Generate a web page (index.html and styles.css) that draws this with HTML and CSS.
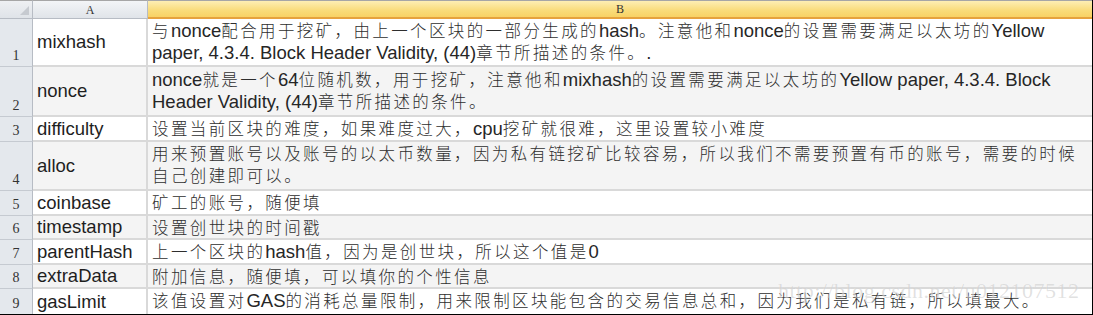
FILE: index.html
```html
<!DOCTYPE html>
<html lang="zh">
<head>
<meta charset="utf-8">
<title>genesis</title>
<link rel="stylesheet" href="styles.css">
</head>
<body>
<div class="sheet">
  <div class="row head">
    <div class="num corner"><span class="tri"></span></div>
    <div class="a colhead">A</div>
    <div class="b colhead sel">B</div>
  </div>
  <div class="row h48">
    <div class="num">1</div>
    <div class="a">mixhash</div>
    <div class="b">与<span class="en">nonce</span>配合用于挖矿，由上一个区块的一部分生成的<span class="en">hash</span>。注意他和<span class="en">nonce</span>的设置需要满足以太坊的<span class="en">Yellow</span><br><span class="en">paper, 4.3.4. Block Header Validity, (44)</span>章节所描述的条件。<span class="en">.</span></div>
  </div>
  <div class="row h50 alt">
    <div class="num">2</div>
    <div class="a">nonce</div>
    <div class="b"><span class="en">nonce</span>就是一个<span class="en">64</span>位随机数，用于挖矿，注意他和<span class="en">mixhash</span>的设置需要满足以太坊的<span class="en">Yellow paper, 4.3.4. Block</span><br><span class="en">Header Validity, (44)</span>章节所描述的条件。</div>
  </div>
  <div class="row h25">
    <div class="num">3</div>
    <div class="a">difficulty</div>
    <div class="b">设置当前区块的难度，如果难度过大，<span class="en">cpu</span>挖矿就很难，这里设置较小难度</div>
  </div>
  <div class="row h49 alt">
    <div class="num">4</div>
    <div class="a">alloc</div>
    <div class="b">用来预置账号以及账号的以太币数量，因为私有链挖矿比较容易，所以我们不需要预置有币的账号，需要的时候<br>自己创建即可以。</div>
  </div>
  <div class="row h25">
    <div class="num">5</div>
    <div class="a">coinbase</div>
    <div class="b">矿工的账号，随便填</div>
  </div>
  <div class="row h24 alt">
    <div class="num">6</div>
    <div class="a">timestamp</div>
    <div class="b">设置创世块的时间戳</div>
  </div>
  <div class="row h25">
    <div class="num">7</div>
    <div class="a">parentHash</div>
    <div class="b">上一个区块的<span class="en">hash</span>值，因为是创世块，所以这个值是<span class="en">0</span></div>
  </div>
  <div class="row h24 alt">
    <div class="num">8</div>
    <div class="a">extraData</div>
    <div class="b">附加信息，随便填，可以填你的个性信息</div>
  </div>
  <div class="row h25 last">
    <div class="num">9</div>
    <div class="a">gasLimit</div>
    <div class="b">该值设置对<span class="en">GAS</span>的消耗总量限制，用来限制区块能包含的交易信息总和，因为我们是私有链，所以填最大。</div>
  </div>
  <div class="wm">http://blog.csdn.net/u012107512</div>
</div>
</body>
</html>
```

FILE: styles.css
```css
html, body {
  margin: 0;
  padding: 0;
  background: #ffffff;
}

.sheet {
  position: relative;
  width: 1092px;
  border-right: 1px solid #000000;
  border-bottom: 1px solid #000000;
  font-family: "Liberation Sans", "Noto Sans CJK SC", sans-serif;
  color: #2b2b2b;
}

.row {
  display: flex;
  box-sizing: border-box;
}

.head { height: 19px; }
.h48 { height: 48px; }
.h50 { height: 50px; }
.h49 { height: 49px; }
.h25 { height: 25px; }
.h24 { height: 24px; }

.num {
  width: 33px;
  flex: none;
  box-sizing: border-box;
  background: #e4e8ed;
  border-right: 1px solid #b7bcc4;
  border-bottom: 1px solid #c5cad1;
  display: flex;
  align-items: flex-end;
  justify-content: center;
  font-family: "Liberation Serif", "DejaVu Serif", serif;
  font-size: 14px;
  line-height: 14px;
  padding-bottom: 3px;
  color: #333333;
}

.a {
  width: 115px;
  flex: none;
  box-sizing: border-box;
  border-right: 2px solid #d9d9d9;
  border-bottom: 2px solid #d9d9d9;
  display: flex;
  align-items: center;
  padding-left: 4px;
  font-size: 18.5px;
  color: #1e1e1e;
  white-space: nowrap;
}

.b {
  width: 944px;
  flex: none;
  box-sizing: border-box;
  border-bottom: 2px solid #d9d9d9;
  display: block;
  padding-left: 4px;
  font-size: 16.5px;
  font-weight: 300;
  letter-spacing: 2.38px;
  line-height: 22px;
  color: #2e2e2e;
  white-space: nowrap;
}

.h25 .b, .h24 .b { padding-top: 1px; }
.h48 .b { padding-top: 1px; }
.h50 .b { padding-top: 2px; }
.h49 .b { padding-top: 1px; }

.en {
  font-size: 18.5px;
  font-weight: 400;
  letter-spacing: 0;
  color: #262626;
}

.alt .a, .alt .b { background: #f4f4f4; }

.last .a, .last .b { border-bottom: none; }
.last .num { border-bottom: none; }

/* header */
.head .num, .head .a, .head .b {
  border-top: 1px solid #a6a6a6;
}

.corner {
  position: relative;
  background: linear-gradient(#eef0f3, #dfe3e8);
  border-bottom: 1px solid #b7bcc4;
  padding: 0;
}

.tri {
  position: absolute;
  right: 3px;
  bottom: 3px;
  width: 0;
  height: 0;
  border-left: 9px solid transparent;
  border-bottom: 9px solid #c6cad0;
}

.colhead {
  justify-content: center;
  align-items: center;
  padding: 0;
  font-family: "Liberation Serif", "DejaVu Serif", serif;
  font-size: 12px;
  font-weight: 400;
  letter-spacing: 0;
  line-height: 16px;
  color: #333333;
  text-align: center;
}

.head .a {
  background: linear-gradient(#f3f5f7, #e0e4e9);
  border-right: 1px solid #b7bcc4;
  border-bottom: 1px solid #b7bcc4;
  width: 115px;
}

.head .sel {
  display: block;
  background: linear-gradient(#fdeeb4, #f9db79 60%, #f8d264);
  border-bottom: 2px solid #e6a23d;
  border-top: 1px solid #a6a6a6;
}

.wm {
  position: absolute;
  left: 778px;
  top: 278px;
  font-family: "Liberation Serif", "DejaVu Serif", serif;
  font-size: 22px;
  letter-spacing: 0.5px;
  color: rgba(150, 150, 150, 0.28);
  text-shadow: 0 0 1px rgba(255, 255, 255, 0.6);
  white-space: nowrap;
  pointer-events: none;
}
```
